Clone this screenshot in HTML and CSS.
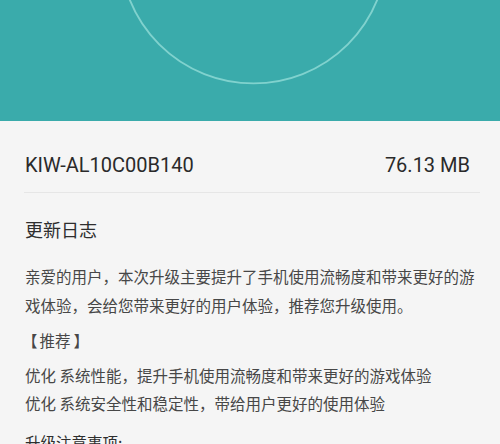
FILE: index.html
```html
<!DOCTYPE html>
<html lang="zh-CN">
<head>
<meta charset="utf-8">
<link rel="stylesheet" href="styles.css">
</head>
<body>
<header class="hero">
  <svg class="hero-ring" width="500" height="121" viewBox="0 0 500 121">
    <circle cx="253.5" cy="-50" r="133.4" fill="none" stroke="#80d2ce" stroke-width="1.9"/>
  </svg>
</header>
<main class="content">
  <div class="info-row">
    <span class="version">KIW-AL10C00B140</span>
    <span class="size">76.13 MB</span>
  </div>
  <h2 class="log-title">更新日志</h2>
  <p class="para intro"><span class="full-line">亲爱的用户，本次升级主要提升了手机使用流畅度和带来更好的游</span>戏体验，会给您带来更好的用户体验，推荐您升级使用。</p>
  <p class="para tag">【<span class="tag-word">推荐</span>】</p>
  <p class="para list">优化 系统性能，提升手机使用流畅度和带来更好的游戏体验<br>优化 系统安全性和稳定性，带给用户更好的使用体验</p>
  <p class="para notice">升级注意事项:</p>
</main>
</body>
</html>
```

FILE: styles.css
```css
html, body {
  margin: 0;
  padding: 0;
}
body {
  background: #f5f5f5;
  font-family: Roboto, "Noto Sans CJK SC", sans-serif;
  width: 500px;
  height: 444px;
  overflow: hidden;
}
.hero {
  height: 121px;
  background: #3aabab;
  overflow: hidden;
}
.hero-ring {
  display: block;
}
.content {
  padding: 0 20px 0 24px;
}
.info-row {
  display: flex;
  justify-content: space-between;
  align-items: baseline;
  padding: 32px 10px 15px 0;
  border-bottom: 1px solid #e6e6e6;
  font-size: 20px;
  line-height: 24px;
  color: #2a2a2a;
}
.version {
  padding-left: 1px;
}
.log-title {
  margin: 24px 0 0 1px;
  font-family: "Noto Sans CJK SC", sans-serif;
  font-weight: normal;
  font-size: 18px;
  line-height: 24px;
  color: #2e2e2e;
}
.para {
  margin: 21px 8px 0 1px;
  font-family: "Noto Sans CJK SC", sans-serif;
  font-size: 15.5px;
  line-height: 28.5px;
  color: #474747;
}
.full-line {
  display: block;
  white-space: nowrap;
  text-align: justify;
  text-align-last: justify;
}
.tag {
  margin-top: 7px;
  margin-left: -2px;
}
.tag-word {
  margin: 0 3px 0 2px;
}
.list {
  margin-top: 6px;
}
.notice {
  margin-top: 10px;
  color: #2e2e2e;
}
```
